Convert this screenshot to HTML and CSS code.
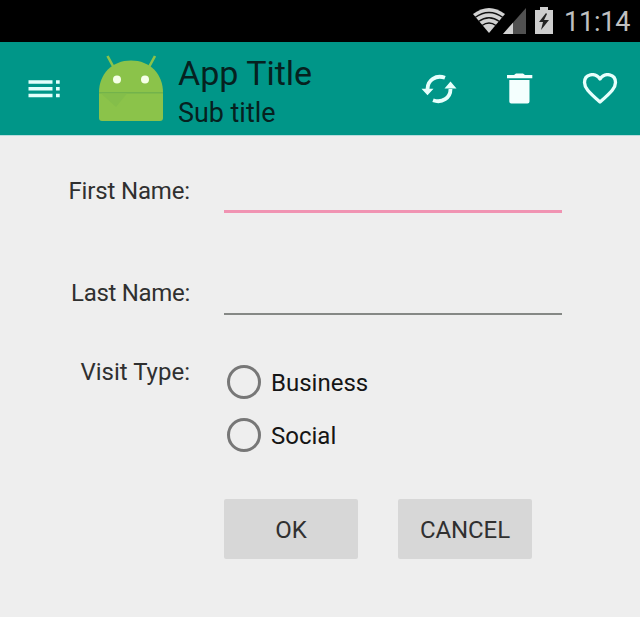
FILE: index.html
```html
<!DOCTYPE html>
<html lang="en">
<head>
<meta charset="utf-8">
<title>App Title</title>
<link rel="stylesheet" href="styles.css">
</head>
<body>
<header class="status">
  <svg class="status-icons" width="82" height="41" viewBox="472 0 82 41">
    <path d="M473 14Q489 2 505 14L489 33Z" fill="#d2d2d2"/>
    <g fill="none" stroke="#111" stroke-width="1.5">
      <path d="M475 17.5Q489 7.5 503 17.5M478.500 21.500Q489 14 499.500 21.500M482 25.500Q489 20.500 496 25.500"/>
    </g>
    <path d="M526 8V34H503Z" fill="#515151"/>
    <path d="M513 22.700V34H503Z" fill="#d2d2d2"/>
    <path d="M535 10h5V7h8v3h5v24h-18Z" fill="#cecece"/>
    <path d="M546 13l-7 9h4l-2 8 8-10h-5l3-6Z" fill="#222"/>
  </svg>
  <span class="clock">11:14</span>
</header>
<nav class="toolbar">
  <svg class="menu" width="34" height="20" viewBox="27 79 34 20" fill="#e3fffb">
    <path d="M28.500 80.200h24v3.500h-24zM28.500 87h24v3.500h-24zM28.500 93.800h24v3.500h-24zM56 80.200h3.700v3.500H56zM56 87h3.700v3.500H56zM56 93.800h3.700v3.500H56z"/>
  </svg>
  <svg class="logo" width="66" height="68" viewBox="98 54 66 68">
    <path d="M107.500 56l6 11M155 56l-6 11" stroke="#8bc34a" stroke-width="2.600"/>
    <path d="M99 92.500C99 74 112 60.500 131 60.500S163 74 163 92.500V118q0 3-3 3H102q-3 0-3-3Z" fill="#8bc34a"/>
    <path d="M99 92H163V93.500H99Z" fill="#73b34b"/>
    <path d="M101 93.500L116 107 127 93.500Z" fill="#84be4a"/>
    <circle cx="117" cy="79.500" r="4" fill="#f5ffe8"/>
    <circle cx="145" cy="79.500" r="4" fill="#f5ffe8"/>
  </svg>
  <div class="titles">
    <div class="title">App Title</div>
    <div class="subtitle">Sub title</div>
  </div>
  <div class="actions">
    <svg width="36" height="32" viewBox="421 73 36 32">
      <path d="M427.500 89C427.500 80 436 74.500 445 77.800M450.500 89C450.500 98 442 103.500 433 100.200" fill="none" stroke="#e6fffc" stroke-width="3.800"/>
      <path d="M421.500 88.700h12l-6 6.500ZM444.500 88.500h12l-6-7Z" fill="#e6fffc"/>
    </svg>
    <svg width="28" height="32" viewBox="506 73 28 32">
      <path d="M507 75h7l2-1.500h7L525 75h7.300v3.300H507ZM509.300 80H529.500V101.500q0 2-2 2H511.300q-2 0-2-2Z" fill="#f4fffe"/>
    </svg>
    <svg width="36" height="32" viewBox="582 73 36 32">
      <path d="M600 102C588 91.500 584.500 87.500 584.500 82.500C584.500 74 595 71.800 600 79C605 71.800 615.500 74 615.500 82.500C615.500 87.500 612 91.500 600 102Z" fill="none" stroke="#e6fffc" stroke-width="3.300" stroke-linejoin="round"/>
    </svg>
  </div>
</nav>
<main class="form">
  <label class="label first" for="first">First Name:</label>
  <input class="field active" id="first" type="text">
  <label class="label last" for="last">Last Name:</label>
  <input class="field" id="last" type="text">
  <span class="label visit">Visit Type:</span>
  <div class="choices">
    <label class="choice"><input type="radio" name="visit"><span>Business</span></label>
    <label class="choice"><input type="radio" name="visit"><span>Social</span></label>
  </div>
  <div class="buttons">
    <button type="button">OK</button>
    <button type="button">CANCEL</button>
  </div>
</main>
</body>
</html>
```
FILE: styles.css
```css
* { box-sizing: border-box; }
body {
  margin: 0;
  height: 617px;
  overflow: hidden;
  background: #eee;
  color: #303030;
  font-family: Roboto, "Liberation Sans", sans-serif;
}
svg { display: block; flex: none; }
.status {
  display: flex;
  justify-content: flex-end;
  height: 42px;
  padding-right: 9px;
  background: #000;
}
.clock {
  margin-left: 10px;
  padding-top: 2px;
  width: 67px;
  line-height: 41px;
  font-size: 27px;
  letter-spacing: -0.2px;
  color: #c0c0c0;
}
.toolbar {
  display: flex;
  align-items: flex-start;
  height: 94px;
  padding: 12px 22px 0 27px;
  background: #009688;
  border-bottom: 1px solid #b9dcdd;
}
.menu { margin-top: 25px; }
.logo { margin-left: 37px; }
.titles {
  margin-left: 14px;
  color: #06211f;
  white-space: nowrap;
}
.title { font-size: 34px; line-height: 38px; }
.subtitle { font-size: 26.9px; line-height: 42px; }
.actions {
  display: flex;
  justify-content: space-between;
  width: 197px;
  margin: 19px 0 0 auto;
}
.form {
  display: grid;
  grid-template-columns: 190px 338px;
  grid-template-rows: 102px 92px 137px 60px;
  column-gap: 34px;
  padding-top: 32px;
}
.label {
  text-align: right;
  font-size: 24px;
  line-height: 46px;
}
.first { letter-spacing: -0.15px; }
.last { line-height: 47px; letter-spacing: -0.3px; }
.visit { margin-top: -13px; }
.field {
  width: 338px;
  height: 45px;
  padding: 0 4px;
  border: 0;
  border-bottom: 2px solid #858885;
  outline: 0;
  background: transparent;
  font: 24px Roboto, sans-serif;
}
.field.active { border-bottom: 3px solid #f093b2; }
.choices { margin-top: -7px; color: #151515; }
.choice {
  display: flex;
  align-items: center;
  gap: 10px;
  height: 53px;
  padding-left: 3px;
  font-size: 24px;
}
.choice span { padding-top: 2px; }
.choice input {
  appearance: none;
  width: 34px;
  height: 34px;
  margin: 0;
  border: 3.5px solid #777;
  border-radius: 50%;
}
.buttons {
  grid-column: 2;
  display: flex;
  gap: 40px;
}
button {
  width: 134px;
  height: 60px;
  padding: 2px 0 0;
  border: 0;
  border-radius: 2px;
  background: #d7d7d7;
  color: #303030;
  font: 24px Roboto, sans-serif;
  letter-spacing: -0.1px;
}
```
